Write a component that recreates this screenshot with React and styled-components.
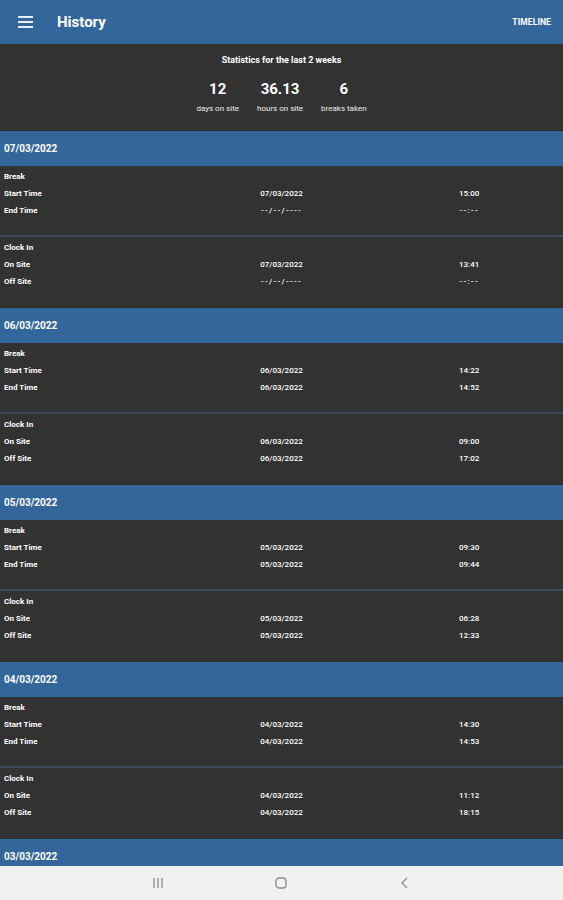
import React from "react";
import styled, { createGlobalStyle } from "styled-components";

const GlobalStyle = createGlobalStyle`
	html, body {
		margin: 0;
		padding: 0;
		background: #323232;
	}
	* {
		box-sizing: border-box;
	}
`;

const Screen = styled.div`
	width: 563px;
	height: 900px;
	display: flex;
	flex-direction: column;
	overflow: hidden;
	background: #323232;
	font-family: Roboto, "Liberation Sans", sans-serif;
	color: #ffffff;
`;

const AppBar = styled.div`
	height: 44px;
	flex: none;
	display: flex;
	align-items: center;
	background: #33669a;
	padding: 0 12px 0 18px;
`;

const MenuButton = styled.div`
	width: 15px;
	display: flex;
	flex-direction: column;
	gap: 3px;
	margin-right: 24px;

	span {
		display: block;
		height: 2px;
		background: #e8eef5;
	}
`;

const Title = styled.div`
	font-size: 15px;
	font-weight: 700;
	flex: 1;
	padding-bottom: 1px;
`;

const Action = styled.div`
	font-size: 8.5px;
	font-weight: 700;
	letter-spacing: 0.1px;
`;

const Scroll = styled.div`
	flex: 1;
	overflow: hidden;
`;

const Stats = styled.div`
	height: 86px;
	display: flex;
	flex-direction: column;
	align-items: center;
	padding-top: 10px;
`;

const StatsTitle = styled.div`
	font-size: 9px;
	font-weight: 700;
	line-height: 12px;
`;

const StatRow = styled.div`
	display: flex;
	gap: 18px;
	margin-top: 14px;
`;

const Stat = styled.div`
	display: flex;
	flex-direction: column;
	align-items: center;
`;

const StatValue = styled.div`
	font-size: 15px;
	font-weight: 700;
	line-height: 18px;
`;

const StatLabel = styled.div`
	font-size: 8px;
	line-height: 10px;
	margin-top: 6px;
	color: #eeeeee;
`;

const DayHeader = styled.div`
	height: 36px;
	border-top: 1px solid #2a2a2a;
	background: #33669a;
	display: flex;
	align-items: center;
	padding: 0 4px;
	font-size: 10px;
	font-weight: 700;
`;

const Block = styled.div`
	height: ${(p) => (p.divided ? 71 : 70)}px;
	padding-top: 2px;
	border-bottom: ${(p) => (p.divided ? "2px solid #3c4a57" : "none")};
`;

const Row = styled.div`
	display: grid;
	grid-template-columns: 1fr 1fr 1fr;
	align-items: center;
	height: 17px;
	font-size: 8px;
`;

const Label = styled.div`
	padding-left: 4px;
	font-weight: 700;
`;

const Value = styled.div`
	text-align: center;
	font-weight: 500;
	letter-spacing: ${(p) => (p.empty ? "1.3px" : "0")};
`;

const NavBar = styled.div`
	height: 34px;
	flex: none;
	background: #f1f1f1;
	display: grid;
	grid-template-columns: 1fr 1fr 1fr;
	align-items: center;
	padding: 0 96px;
	justify-items: center;
`;

const days = [
	{
		date: "07/03/2022",
		breakStart: ["07/03/2022", "15:00"],
		breakEnd: ["--/--/----", "--:--"],
		onSite: ["07/03/2022", "13:41"],
		offSite: ["--/--/----", "--:--"],
	},
	{
		date: "06/03/2022",
		breakStart: ["06/03/2022", "14:22"],
		breakEnd: ["06/03/2022", "14:52"],
		onSite: ["06/03/2022", "09:00"],
		offSite: ["06/03/2022", "17:02"],
	},
	{
		date: "05/03/2022",
		breakStart: ["05/03/2022", "09:30"],
		breakEnd: ["05/03/2022", "09:44"],
		onSite: ["05/03/2022", "06:28"],
		offSite: ["05/03/2022", "12:33"],
	},
	{
		date: "04/03/2022",
		breakStart: ["04/03/2022", "14:30"],
		breakEnd: ["04/03/2022", "14:53"],
		onSite: ["04/03/2022", "11:12"],
		offSite: ["04/03/2022", "18:15"],
	},
	{
		date: "03/03/2022",
	},
];

const EntryRow = ({ label, value }) => (
	<Row>
		<Label>{label}</Label>
		<Value empty={value && value[0].startsWith("-")}>{value ? value[0] : ""}</Value>
		<Value empty={value && value[1].startsWith("-")}>{value ? value[1] : ""}</Value>
	</Row>
);

const Day = ({ day }) => (
	<>
		<DayHeader>{day.date}</DayHeader>
		{day.breakStart && (
			<>
				<Block divided>
					<EntryRow label="Break" />
					<EntryRow label="Start Time" value={day.breakStart} />
					<EntryRow label="End Time" value={day.breakEnd} />
				</Block>
				<Block>
					<EntryRow label="Clock In" />
					<EntryRow label="On Site" value={day.onSite} />
					<EntryRow label="Off Site" value={day.offSite} />
				</Block>
			</>
		)}
	</>
);

const App = () => {
	return (
		<Screen>
			<GlobalStyle />
			<AppBar>
				<MenuButton>
					<span />
					<span />
					<span />
				</MenuButton>
				<Title>History</Title>
				<Action>TIMELINE</Action>
			</AppBar>
			<Scroll>
				<Stats>
					<StatsTitle>Statistics for the last 2 weeks</StatsTitle>
					<StatRow>
						<Stat>
							<StatValue>12</StatValue>
							<StatLabel>days on site</StatLabel>
						</Stat>
						<Stat>
							<StatValue>36.13</StatValue>
							<StatLabel>hours on site</StatLabel>
						</Stat>
						<Stat>
							<StatValue>6</StatValue>
							<StatLabel>breaks taken</StatLabel>
						</Stat>
					</StatRow>
				</Stats>
				{days.map((d) => (
					<Day key={d.date} day={d} />
				))}
			</Scroll>
			<NavBar>
				<svg width="14" height="14" viewBox="0 0 14 14">
					<g stroke="#8a8a8a" strokeWidth="1.3">
						<line x1="3" y1="2" x2="3" y2="12" />
						<line x1="7" y1="2" x2="7" y2="12" />
						<line x1="11" y1="2" x2="11" y2="12" />
					</g>
				</svg>
				<svg width="14" height="14" viewBox="0 0 14 14">
					<rect x="2" y="2" width="10" height="10" rx="3" fill="none" stroke="#8a8a8a" strokeWidth="1.3" />
				</svg>
				<svg width="14" height="14" viewBox="0 0 14 14">
					<polyline points="9,2 4,7 9,12" fill="none" stroke="#8a8a8a" strokeWidth="1.3" />
				</svg>
			</NavBar>
		</Screen>
	);
};

export default App;
